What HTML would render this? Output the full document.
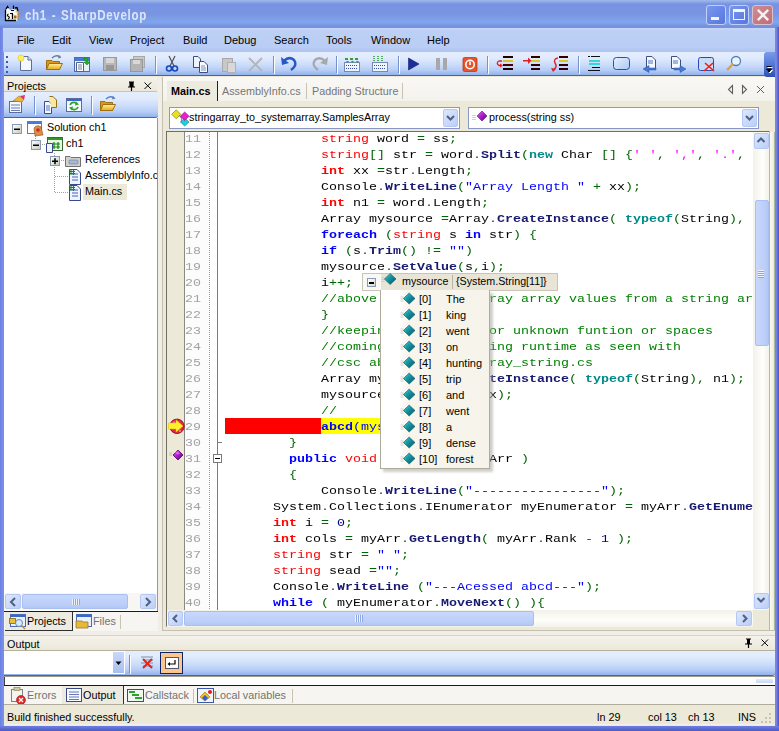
<!DOCTYPE html>
<html><head><meta charset="utf-8">
<style>
*{margin:0;padding:0;box-sizing:border-box}
html,body{width:779px;height:731px;overflow:hidden;background:#ECE9D8;font-family:"Liberation Sans",sans-serif;font-size:11px;color:#000;position:relative}
.a{position:absolute}
i{font-style:normal}
svg{position:absolute;overflow:visible}
#title{left:0;top:0;width:779px;height:28px;background:linear-gradient(#A0BAEC 0,#8EA8E8 2px,#7893E2 4px,#7894E2 14px,#7CA0E8 19px,#80A6EC 22px,#7E9EE8 24px,#7490DC 26px,#7A92DC 28px)}
#title .t{left:25px;top:8px;font-size:13.8px;font-weight:bold;color:#DCE5F8;letter-spacing:0.8px;word-spacing:1px;transform:scaleX(0.84);transform-origin:0 0}
.frameL{background:linear-gradient(90deg,#6A80E4,#7890E8)}
.frameR{background:linear-gradient(90deg,#7C86E6,#7480E2 40%,#4A50C0)}
#menu{left:3px;top:28px;width:772px;height:24px;background:linear-gradient(#C6D6F8 0,#BCCFF5 15%,#BACDF4 80%,#AEC4F0 100%)}
#menu span{position:absolute;top:6px}
.tbar{background:linear-gradient(#E4EEFE 0,#E0EBFD 25%,#CCDDFA 55%,#B4CCF6 80%,#92B2EC 100%)}
.hdr{background:#EDEBE0}
.code{font-family:"Liberation Mono",monospace;font-size:13.33px;line-height:16px;white-space:pre;color:#000;transform:scaleY(0.86);transform-origin:0 0}
.ln{color:#A3A3A3}
.k{color:#FF0000}
.kb{color:#FF0000;font-weight:bold}
.b{color:#0000FF;font-weight:bold}
.bb{color:#0000FF;font-weight:bold}
.sb{color:#0000FF}
.m{color:#191970;font-weight:bold}
.g{color:#008000}
.p{color:#006400}
.s{color:#0000FF}
.n{color:#00008B}
.t2{color:#008B8B;font-weight:bold}
.c{color:#FF00FF}
.sbtn{background:linear-gradient(135deg,#DDE7FD,#BCCEF7);border:1px solid #B4C8F6;border-radius:2px}
.thumbV{background:linear-gradient(90deg,#C9D7FD,#BBCFF8 70%,#B2C8F5);border:1px solid #A9BFF0;border-radius:2px}
.thumbH{background:linear-gradient(#C9D7FD,#BBCFF8 70%,#B2C8F5);border:1px solid #A9BFF0;border-radius:2px}
.sep{width:1px;background:#8DA9DC;border-right:1px solid #fff}
</style></head><body>
<!-- title -->
<div id="title" class="a"><div class="a t">ch1 - SharpDevelop</div></div>
<svg style="left:0;top:0" width="24" height="26" viewBox="0 0 24 26">
 <path d="M5.5 10 L8 8 L10 10 L13 9 L16 10 L17.5 11 V20.5 H5.5Z" fill="#F8F8F4"/>
 <path d="M5.5 9.5 V20.5 H16" fill="none" stroke="#000" stroke-width="1.3"/>
 <path d="M6 9 L7.5 6.5 L8.5 8 M13.5 5.5 V9 M15 8 L17 7.5 L18 11" fill="none" stroke="#000" stroke-width="1.3"/>
 <path d="M11 10.5 h3 M10 13.5 h3" stroke="#000" stroke-width="1.2"/>
 <path d="M8.5 14 Q6.5 15 8.5 16.5 Q10.5 17.5 8 19" fill="none" stroke="#000" stroke-width="1.1"/>
 <path d="M12.5 14 V19" stroke="#000" stroke-width="1.3"/>
 <rect x="14" y="15.5" width="2.5" height="3" fill="#8A7020"/>
 <path d="M18.2 11 V20.5" stroke="#E07818" stroke-width="1.2" stroke-dasharray="1.5 1"/>
 <circle cx="16.5" cy="11.5" r="1" fill="#E0D040"/>
</svg>
<div class="a" style="left:706px;top:5px;width:20px;height:20px;border:1px solid #C3D0F5;border-radius:3px;background:linear-gradient(135deg,#7A98EC,#5676E2)"><div class="a" style="left:4px;top:11px;width:8px;height:3px;background:#F4F6FD"></div></div>
<div class="a" style="left:729px;top:5px;width:20px;height:20px;border:1px solid #C3D0F5;border-radius:3px;background:linear-gradient(135deg,#7A98EC,#5676E2)"><div class="a" style="left:3px;top:3px;width:12px;height:11px;border:1px solid #F4F6FD;border-top-width:3px"></div></div>
<div class="a" style="left:752px;top:5px;width:21px;height:20px;border:1px solid #D8C0CC;border-radius:3px;background:linear-gradient(135deg,#D08C92,#BC6E78)">
 <svg style="left:3px;top:2px" width="14" height="14" viewBox="0 0 14 14"><path d="M1.8 1.8 L12.2 12.2 M12.2 1.8 L1.8 12.2" stroke="#F6F0F2" stroke-width="2.4"/></svg></div>
<!-- frame -->
<div class="a frameL" style="left:0;top:27px;width:3px;height:704px"></div><div class="a" style="left:3px;top:28px;width:1px;height:698px;background:#8494BC"></div>
<div class="a frameR" style="left:775px;top:27px;width:4px;height:704px"></div>
<div class="a" style="left:0;top:726px;width:779px;height:5px;background:linear-gradient(#6E80DE,#4E58C6)"></div>
<!-- menu -->
<div id="menu" class="a">
 <span style="left:14px">File</span><span style="left:49px">Edit</span><span style="left:86px">View</span><span style="left:127px">Project</span><span style="left:180px">Build</span><span style="left:221px">Debug</span><span style="left:271px">Search</span><span style="left:323px">Tools</span><span style="left:368px">Window</span><span style="left:424px">Help</span>
</div>
<!-- toolbar -->
<div class="a tbar" style="left:4px;top:52px;width:764px;height:24px;border-radius:0 3px 3px 0;border-bottom:1px solid #4262BC"></div>
<div class="a" style="left:764px;top:52px;width:11px;height:25px;background:linear-gradient(#7A9CE8,#5278D4 50%,#2E52B4);border-radius:3px 0 0 3px"></div>
<svg style="left:765px;top:66px" width="9" height="9" viewBox="0 0 9 9"><path d="M2.5 1.5 H7.5 M2.5 4 H7.5 L5 7Z" stroke="#fff" fill="#fff" stroke-width="1"/><path d="M1.5 0.5 H6.5 M1.5 3 H6.5 L4 6Z" stroke="#000" fill="#000" stroke-width="1"/></svg>
<svg style="left:0;top:52px" width="779" height="25" viewBox="0 0 779 25">
 <g fill="#3C5BB0"><rect x="6" y="4" width="2" height="2"/><rect x="6" y="9" width="2" height="2"/><rect x="6" y="14" width="2" height="2"/><rect x="6" y="19" width="2" height="2"/></g>
 <!-- new -->
 <path d="M20.5 4.5 H28 L31.5 8 V18.5 H20.5Z" fill="#F4F8FF" stroke="#5C6E9C"/>
 <path d="M28 4.5 V8 H31.5" fill="#DDE4F3" stroke="#5C6E9C"/>
 <circle cx="21" cy="6" r="3" fill="#FFF060" stroke="#E8D020" stroke-width="0.8"/>
 <!-- open -->
 <defs><linearGradient id="fy" x1="0" y1="0" x2="0" y2="1"><stop offset="0" stop-color="#FFF0A0"/><stop offset="1" stop-color="#E8A818"/></linearGradient></defs>
 <path d="M46.5 8.5 H52 L53 9.5 H59.5 V17.5 H46.5Z" fill="#D89818" stroke="#A07010"/>
 <path d="M46.5 17.5 L49 11.5 H62.5 L59.5 17.5Z" fill="url(#fy)" stroke="#A07010"/>
 <path d="M52 6 Q56 2 60 5" fill="none" stroke="#6C7C98" stroke-width="1.3"/><path d="M59 3 L61.5 5.5 L58 6.5Z" fill="#6C7C98"/>
 <!-- add -->
 <rect x="74.5" y="5.5" width="15" height="14" fill="#E8F0FC" stroke="#4A6CB8"/>
 <rect x="75" y="6" width="14" height="3" fill="#4A78D0"/>
 <path d="M76.5 10.5 H83.5 V19.5 H76.5Z" fill="#fff" stroke="#506080"/>
 <path d="M78 13 H82 M78 15 H82 M78 17 H82" stroke="#7080A0"/>
 <path d="M84 6 Q88 5 88 10 L90 10 L87 13 L84 10 L86 10 Q86 8 84 8Z" fill="#20B020" stroke="#108010" stroke-width="0.5"/>
 <!-- save gray -->
 <rect x="103.5" y="5.5" width="13" height="13" fill="#B8B8B8" stroke="#989898"/>
 <rect x="106" y="6" width="8" height="5" fill="#D8D8D8"/><rect x="106" y="13" width="8" height="5" fill="#989898"/>
 <!-- save all gray -->
 <rect x="133.5" y="4.5" width="11" height="11" fill="#C8C8C8" stroke="#A8A8A8"/>
 <rect x="130.5" y="7.5" width="12" height="12" fill="#B4B4B4" stroke="#989898"/>
 <rect x="133" y="8" width="7" height="4" fill="#D8D8D8"/>
 <!-- sep -->
 <rect x="155" y="4" width="1" height="17" fill="#7592D0"/><rect x="156" y="5" width="1" height="17" fill="#fff"/>
 <!-- cut -->
 <path d="M169 4 L174 14 M175 4 L170 14" stroke="#505050" stroke-width="1.2"/>
 <circle cx="169" cy="16.5" r="2.5" fill="none" stroke="#1848B8" stroke-width="1.6"/><circle cx="175" cy="16.5" r="2.5" fill="none" stroke="#1848B8" stroke-width="1.6"/>
 <!-- copy -->
 <path d="M193.5 4.5 H198 L200.5 7 V15.5 H193.5Z" fill="#EEF3FC" stroke="#404C80"/>
 <path d="M199.5 9.5 H204 L207.5 13 V20.5 H199.5Z" fill="#F6F9FF" stroke="#404C80"/>
 <path d="M201 14 H205 M201 16 H206 M201 18 H206" stroke="#8090C0"/>
 <!-- paste gray -->
 <rect x="222.5" y="6.5" width="10" height="13" fill="#C8C8C8" stroke="#A8A8A8"/>
 <rect x="227.5" y="10.5" width="8" height="10" fill="#D8D8D8" stroke="#B0B0B0"/>
 <!-- delete gray -->
 <path d="M249 6 L262 19 M262 6 L249 19" stroke="#B4B4B4" stroke-width="1.8"/>
 <rect x="273" y="4" width="1" height="17" fill="#7592D0"/><rect x="274" y="5" width="1" height="17" fill="#fff"/>
 <!-- undo -->
 <path d="M284 9 Q289 4 294 8 Q298 13 291 18" fill="none" stroke="#2858C8" stroke-width="2.6"/>
 <path d="M281 5 L282 13 L289 11Z" fill="#2858C8"/>
 <!-- redo gray -->
 <path d="M325 9 Q320 4 315 8 Q311 13 318 18" fill="none" stroke="#A8A8A8" stroke-width="2.4"/>
 <path d="M328 5 L327 13 L320 11Z" fill="#A8A8A8"/>
 <rect x="336" y="4" width="1" height="17" fill="#7592D0"/><rect x="337" y="5" width="1" height="17" fill="#fff"/>
 <!-- build -->
 <rect x="344.5" y="10.5" width="15" height="9" fill="#F0F4FC" stroke="#7A88B8"/>
 <g fill="#3050B0"><rect x="346" y="13" width="1" height="1"/><rect x="348" y="13" width="1" height="1"/><rect x="350" y="13" width="1" height="1"/><rect x="352" y="13" width="1" height="1"/><rect x="354" y="13" width="1" height="1"/><rect x="356" y="13" width="1" height="1"/><rect x="346" y="16" width="1" height="1"/><rect x="348" y="16" width="1" height="1"/><rect x="350" y="16" width="1" height="1"/><rect x="352" y="16" width="1" height="1"/><rect x="354" y="16" width="1" height="1"/><rect x="356" y="16" width="1" height="1"/></g>
 <path d="M345 7 h3 M350 7 h3 M355 7 h3" stroke="#30A030" stroke-width="2"/>
 <path d="M346 9 l1.5 2 l1.5 -2 M351 9 l1.5 2 l1.5 -2 M356 9 l1.5 2 l1.5 -2" fill="#30A030"/>
 <rect x="372.5" y="10.5" width="15" height="9" fill="#F0F4FC" stroke="#7A88B8"/>
 <g fill="#3050B0"><rect x="374" y="13" width="1" height="1"/><rect x="376" y="13" width="1" height="1"/><rect x="378" y="13" width="1" height="1"/><rect x="380" y="13" width="1" height="1"/><rect x="382" y="13" width="1" height="1"/><rect x="384" y="13" width="1" height="1"/><rect x="374" y="16" width="1" height="1"/><rect x="376" y="16" width="1" height="1"/><rect x="378" y="16" width="1" height="1"/><rect x="380" y="16" width="1" height="1"/><rect x="382" y="16" width="1" height="1"/><rect x="384" y="16" width="1" height="1"/></g>
 <path d="M374 4 v5 M378 4 v5 M382 4 v5" stroke="#30A030" stroke-width="1.6" stroke-dasharray="1 1"/>
 <rect x="398" y="4" width="1" height="17" fill="#7592D0"/><rect x="399" y="5" width="1" height="17" fill="#fff"/>
 <!-- play -->
 <path d="M408.5 6 L419 12 L408.5 18Z" fill="#1C2E9C" stroke="#101C70" stroke-width="0.6"/>
 <!-- pause -->
 <rect x="436" y="6" width="4" height="12" fill="#A8A8A8"/><rect x="443" y="6" width="4" height="12" fill="#A8A8A8"/>
 <!-- stop -->
 <rect x="463" y="5.5" width="14" height="14" rx="1.5" fill="#E8542A" stroke="#C03810" stroke-width="0.8"/>
 <circle cx="470" cy="12.5" r="4.2" fill="none" stroke="#fff" stroke-width="1.6"/><path d="M470 9.5 V13" stroke="#fff" stroke-width="1.6"/>
 <rect x="487" y="4" width="1" height="17" fill="#7592D0"/><rect x="488" y="5" width="1" height="17" fill="#fff"/>
  <!-- step icons -->
 <rect x="503" y="4" width="10" height="2" fill="#200000"/><rect x="503" y="8" width="10" height="2" fill="#D8C820"/><rect x="503" y="12" width="10" height="2" fill="#4A0000"/><rect x="503" y="16" width="10" height="2" fill="#200000"/>
 <path d="M502 9 H499 Q495.5 11 499 13.5 H501" fill="none" stroke="#E02020" stroke-width="1.3"/><path d="M500 11.5 L503 13.5 L500 15.5Z" fill="#E02020"/>
 <rect x="531" y="4" width="9" height="2" fill="#300000"/><rect x="531" y="8" width="9" height="2" fill="#D8C820"/><rect x="531" y="12" width="9" height="2" fill="#300000"/><rect x="531" y="16" width="9" height="2" fill="#300000"/>
 <rect x="523" y="8" width="6" height="1.5" fill="#E02020"/><path d="M528 5.5 L531.5 8.7 L528 12Z" fill="#E02020"/>
 <rect x="559" y="4" width="9" height="2" fill="#300000"/><rect x="559" y="8" width="9" height="2" fill="#D8C820"/><rect x="559" y="12" width="9" height="2" fill="#300000"/><rect x="559" y="16" width="9" height="2" fill="#300000"/>
 <path d="M558 6 Q553 7 555 11 Q558 15 553 18" fill="none" stroke="#E02020" stroke-width="1.4"/><path d="M551 16 L553 20 L556 17Z" fill="#E02020"/>
 <rect x="578" y="4" width="1" height="17" fill="#7592D0"/><rect x="579" y="5" width="1" height="17" fill="#fff"/>
 <rect x="588" y="4" width="2" height="1" fill="#101010"/><rect x="591" y="4" width="9" height="1" fill="#101010"/>
 <rect x="589" y="8" width="11" height="2" fill="#30D8D8"/><rect x="589" y="11" width="11" height="2" fill="#30D8D8"/>
 <rect x="592" y="15" width="8" height="1" fill="#101010"/><rect x="588" y="18" width="12" height="1" fill="#101010"/>
 <defs><linearGradient id="rr" x1="0" y1="0" x2="1" y2="1"><stop offset="0" stop-color="#E8F2FF"/><stop offset="1" stop-color="#A8C8F0"/></linearGradient></defs>
 <rect x="613.5" y="5.5" width="16" height="12" rx="3" fill="url(#rr)" stroke="#2848D0"/>
<!-- page arrows -->
 <path d="M646.5 4.5 H652 L655.5 8 V16.5 H646.5Z" fill="#F4F8FF" stroke="#404C80"/>
 <path d="M648 9 H653 M648 11 H653" stroke="#5070C0"/>
 <path d="M656 16 H649 V13.5 L643 17 L649 20.5 V18 H656Z" fill="#4878D0" stroke="#2050A8" stroke-width="0.5"/>
 <path d="M671.5 4.5 H677 L680.5 8 V16.5 H671.5Z" fill="#F4F8FF" stroke="#404C80"/>
 <path d="M673 9 H678 M673 11 H678" stroke="#5070C0"/>
 <path d="M674 16 H680 V13.5 L686 17 L680 20.5 V18 H674Z" fill="#4878D0" stroke="#2050A8" stroke-width="0.5"/>
 <rect x="698.5" y="5.5" width="15" height="13" rx="2" fill="#C8DCF8" stroke="#2848B8"/>
 <path d="M705 11 L714 19 M713 11 L704 19" stroke="#F02010" stroke-width="1.6"/>
 <circle cx="736" cy="9" r="4.5" fill="#E8F4FF" stroke="#5080B0" stroke-width="1.3"/>
 <path d="M733 12 L727 18" stroke="#E0A040" stroke-width="2.4"/>
</svg>
<!-- projects pad -->
<div class="a" style="left:4px;top:77px;width:154px;height:15px;background:linear-gradient(#F4F2EA,#EBE8DA);border-right:1px solid #B8B4A0;border-bottom:1px solid #C8C4B0"></div>
<div class="a" style="left:7px;top:80px;font-size:10.8px">Projects</div>
<svg style="left:126px;top:81px" width="30" height="11" viewBox="0 0 30 11">
 <path d="M3 1 H8 M4 1 V6 H7 V1 M2 6 H9 M5.5 6 V10" stroke="#000" stroke-width="1.2" fill="none"/><rect x="4" y="1" width="3" height="5" fill="#000"/>
 <path d="M18.5 1.5 L25 8 M25 1.5 L18.5 8" stroke="#000" stroke-width="1"/>
</svg>
<div class="a" style="left:157px;top:77px;width:5px;height:554px;background:#F0EEE6"></div>
<div class="a tbar" style="left:4px;top:92px;width:154px;height:26px;border-bottom:1px solid #4262BC;border-radius:0 0 3px 0"></div>
<svg style="left:0;top:92px" width="160" height="26" viewBox="0 0 160 26">
 <rect x="9.5" y="9.5" width="12" height="11" fill="#F4F8FF" stroke="#5A6A9C"/>
 <path d="M11 13 H20 M11 16 H20 M11 18.5 H20" stroke="#6A7AAC"/>
 <path d="M13 9 L19 4 L24 7 L22 10Z" fill="#E8B838" stroke="#A07820" stroke-width="0.6"/><path d="M20 4 L25 3 L24 8Z" fill="#E83070"/>
 <rect x="34" y="4" width="1" height="18" fill="#7592D0"/><rect x="35" y="5" width="1" height="18" fill="#fff"/>
 <path d="M44.5 9.5 H49 L51.5 12 V21.5 H44.5Z" fill="#F4F8FF" stroke="#404C80"/>
 <path d="M46 14 H50 M46 16 H50 M46 18 H50" stroke="#5070C0"/>
 <path d="M49.5 4.5 H53 L56.5 8 V15.5 H51" fill="#F8E8A0" stroke="#907020"/>
 <rect x="66.5" y="6.5" width="15" height="13" fill="#F4F8FF" stroke="#5A6A9C"/><rect x="67" y="7" width="14" height="2" fill="#3A68C8"/>
 <path d="M70 13 A4 4 0 0 1 77 12" fill="none" stroke="#30A030" stroke-width="1.8"/><path d="M76 9.5 L79 12.5 L75 13.5Z" fill="#30A030"/>
 <path d="M78 15 A4 4 0 0 1 71 16" fill="none" stroke="#30A030" stroke-width="1.8"/><path d="M72 18.5 L69 15.5 L73 14.5Z" fill="#30A030"/>
 <rect x="91" y="4" width="1" height="18" fill="#7592D0"/><rect x="92" y="5" width="1" height="18" fill="#fff"/>
 <path d="M100.5 9.5 H105 L106 10.5 H112.5 V18.5 H100.5Z" fill="#D89818" stroke="#A07010"/>
 <path d="M100.5 18.5 L103 12.5 H115.5 L112.5 18.5Z" fill="url(#fy)" stroke="#A07010"/>
 <path d="M106 7 Q110 3 114 6" fill="none" stroke="#5A7AB8" stroke-width="1.3"/><path d="M113 4 L115.5 6.5 L112 7.5Z" fill="#5A7AB8"/>
</svg>
<div class="a" style="left:4px;top:118px;width:153px;height:493px;background:#fff"></div><div class="a" style="left:157px;top:118px;width:1px;height:493px;background:#7F9AD0"></div>
<!-- tree -->
<svg style="left:0;top:118px" width="157" height="90" viewBox="0 0 157 90">
 <g stroke="#A0A0A0" stroke-dasharray="1 1" fill="none">
  <path d="M35.5 16 V26"/><path d="M40 26.5 H46"/>
  <path d="M54.5 35 V74.5"/><path d="M59 42.5 H65"/><path d="M55 58.5 H68"/><path d="M55 74.5 H68"/>
 </g>
 <defs><linearGradient id="bx" x1="0" y1="0" x2="1" y2="1"><stop offset="0" stop-color="#fff"/><stop offset="1" stop-color="#C8C8C0"/></linearGradient></defs><g fill="url(#bx)" stroke="#8A9AB0">
  <rect x="12.5" y="6.5" width="9" height="9"/><rect x="31.5" y="22.5" width="9" height="9"/><rect x="50.5" y="38.5" width="9" height="9"/>
 </g>
 <g fill="#000"><rect x="14" y="10.5" width="6" height="1.5"/><rect x="33" y="26.5" width="6" height="1.5"/><rect x="52" y="42.5" width="6" height="1.5"/><rect x="54.25" y="40.2" width="1.5" height="6"/></g>
 <!-- solution icon -->
 <rect x="27.5" y="3.5" width="14" height="12" fill="#fff" stroke="#6A7AA8"/><rect x="28" y="4" width="13" height="2" fill="#4A7AD8"/>
 <path d="M34 10 Q37 6 41 9 L43 17 L35 18Z" fill="#D89048" stroke="#8A5020" stroke-width="0.6"/><circle cx="38" cy="12" r="1.8" fill="#E02020"/>
 <!-- project icon -->
 <rect x="47.5" y="19.5" width="15" height="13" fill="#E8F8E0" stroke="#3A6A3A"/><rect x="48" y="20" width="14" height="2" fill="#2A9A2A"/>
 <path d="M54 24 v7 M58 24 v7 M52 26 h8 M52 29 h8" stroke="#108010" stroke-width="1.2"/>
 <path d="M46.5 25.5 H52.5 V34.5 H46.5Z" fill="#F0F4FF" stroke="#3A4A8A"/>
 <!-- references folder -->
 <path d="M65.5 38.5 H70 L71 39.5 H80.5 V48.5 H65.5Z" fill="#D0D0D0" stroke="#707070"/>
 <rect x="69" y="42" width="9" height="4" rx="1" fill="#A8B8D0" stroke="#6878A0" stroke-width="0.6"/>
 <!-- cs files -->
 <path d="M69.5 51.5 H77 L80.5 55 V66.5 H69.5Z" fill="#F0F4FF" stroke="#3A4A8A"/>
 <path d="M72 56 H78 M72 59 H78 M72 62 H78" stroke="#4060C0"/>
 <path d="M71 52 v5 M73.5 52 v5 M70 53.5 h5 M70 55.5 h5" stroke="#109010" stroke-width="1.1"/>
 <path d="M69.5 67.5 H77 L80.5 71 V82.5 H69.5Z" fill="#F0F4FF" stroke="#3A4A8A"/>
 <path d="M72 72 H78 M72 75 H78 M72 78 H78" stroke="#4060C0"/>
 <path d="M71 68 v5 M73.5 68 v5 M70 69.5 h5 M70 71.5 h5" stroke="#109010" stroke-width="1.1"/>
</svg>
<div class="a" style="left:47px;top:121px;font-size:10.8px">Solution ch1</div>
<div class="a" style="left:66px;top:137px;font-size:10.8px">ch1</div>
<div class="a" style="left:85px;top:153px;font-size:10.8px">References</div>
<div class="a" style="left:85px;top:169px;width:72px;overflow:hidden;white-space:nowrap;font-size:10.8px">AssemblyInfo.cs</div>
<div class="a" style="left:83px;top:184px;width:44px;height:16px;background:#ECE9D8"></div>
<div class="a" style="left:85px;top:185px;font-size:10.8px">Main.cs</div>
<!-- projects hscroll -->
<div class="a" style="left:4px;top:593px;width:153px;height:17px;background:#F7F6F2"></div>
<div class="a sbtn" style="left:5px;top:594px;width:16px;height:15px"></div>
<div class="a thumbH" style="left:22px;top:594px;width:106px;height:15px"></div>
<div class="a sbtn" style="left:140px;top:594px;width:16px;height:15px"></div>
<svg style="left:0;top:594px" width="160" height="16" viewBox="0 0 160 16">
 <path d="M15 4 L11 8 L15 12" fill="none" stroke="#4D6185" stroke-width="2"/>
 <path d="M146 4 L150 8 L146 12" fill="none" stroke="#4D6185" stroke-width="2"/>
 <path d="M72.5 5 v6 M74.5 5 v6 M76.5 5 v6 M78.5 5 v6" stroke="#EEF3FE"/>
 <path d="M73.5 5 v6 M75.5 5 v6 M77.5 5 v6 M79.5 5 v6" stroke="#8DA6E0"/>
</svg>
<div class="a" style="left:4px;top:611px;width:154px;height:1px;background:#1A1A1A"></div>
<div class="a" style="left:4px;top:612px;width:154px;height:19px;background:#F6F5F1"></div>
<div class="a" style="left:5px;top:612px;width:68px;height:19px;background:#EDEBE0;border-right:1px solid #303030;border-bottom:1px solid #303030"></div>
<svg style="left:0;top:612px" width="160" height="19" viewBox="0 0 160 19">
 <rect x="10.5" y="2.5" width="15" height="12" fill="#E8F0FC" stroke="#4A6CB8"/><rect x="11" y="3" width="14" height="2" fill="#3A68C8"/>
 <rect x="9.5" y="6.5" width="6" height="5" fill="#E8C040" stroke="#A07820"/>
 <circle cx="19" cy="11" r="3.5" fill="#D8ECFC" stroke="#6A8AB0"/><path d="M21.5 13.5 L25 17" stroke="#C09040" stroke-width="1.5"/>
 <rect x="76.5" y="2.5" width="15" height="12" fill="#E8F0FC" stroke="#4A6CB8"/><rect x="77" y="3" width="14" height="2" fill="#3A68C8"/>
 <path d="M76 9 H82 L83 10 H88 V16 H76Z" fill="#E8B838" stroke="#A07820" stroke-width="0.8"/>
 <rect x="120" y="3" width="1" height="14" fill="#C8C4B4"/>
</svg>
<div class="a" style="left:27px;top:615px;font-size:10.8px">Projects</div>
<div class="a" style="left:93px;top:615px;font-size:10.8px;color:#727272">Files</div>
<!-- editor container -->
<div class="a" style="left:162px;top:77px;width:613px;height:554px;background:#ECE9D8;border-left:1px solid #C4C0B0"></div>
<div class="a" style="left:163px;top:77px;width:612px;height:24px;background:linear-gradient(#F9F8F5,#F3F2EC)"></div>
<div class="a" style="left:167px;top:81px;width:51px;height:20px;background:#EDEBE0;border-right:1px solid #202020"></div>
<div class="a" style="left:171px;top:85px;font-size:10.8px;font-weight:bold">Main.cs</div>
<div class="a" style="left:222px;top:85px;font-size:10.8px;color:#767676">AssemblyInfo.cs</div>
<div class="a" style="left:306px;top:83px;width:1px;height:16px;background:#C8C4B4"></div>
<div class="a" style="left:312px;top:85px;font-size:10.8px;color:#767676">Padding Structure</div>
<div class="a" style="left:402px;top:83px;width:1px;height:16px;background:#C8C4B4"></div>
<svg style="left:720px;top:80px" width="50" height="20" viewBox="0 0 50 20">
 <path d="M12.5 5.5 L8.5 9.5 L12.5 13.5Z" fill="none" stroke="#606060" stroke-width="1.1" stroke-linejoin="miter"/>
 <path d="M22.5 5.5 L26.5 9.5 L22.5 13.5Z" fill="none" stroke="#606060" stroke-width="1.1"/>
 <path d="M37 6 L44 13 M44 6 L37 13" stroke="#606060" stroke-width="1"/>
</svg>
<!-- combos -->
<div class="a" style="left:169px;top:107px;width:291px;height:22px;background:#fff;border:1px solid #8896C8"></div>
<div class="a sbtn" style="left:443px;top:109px;width:15px;height:18px"></div>
<div class="a" style="left:468px;top:107px;width:291px;height:22px;background:#fff;border:1px solid #8896C8"></div>
<div class="a sbtn" style="left:742px;top:109px;width:15px;height:18px"></div>
<svg style="left:0;top:107px" width="779" height="22" viewBox="0 0 779 22">
 <path d="M447 9 L450.5 12.5 L454 9" fill="none" stroke="#4D6185" stroke-width="2"/>
 <path d="M746 9 L749.5 12.5 L753 9" fill="none" stroke="#4D6185" stroke-width="2"/>
 <path d="M179 8 L181.5 11 V15 L184 17" fill="none" stroke="#9090A0" stroke-width="1.2"/>
 <path d="M184.7 11 L189 15 L184.7 19 L180.4 15Z" fill="#20D0D0" stroke="#008888" stroke-width="0.6"/>
 <path d="M184.7 5 L189 9.2 L184.7 13.4 L180.4 9.2Z" fill="#E820D0" stroke="#900080" stroke-width="0.6"/>
 <path d="M176.2 2.8 L180.7 7.3 L176.2 11.8 L171.7 7.3Z" fill="#E8E020" stroke="#707000" stroke-width="0.6"/>
 <defs><linearGradient id="pg" x1="0" y1="0" x2="1" y2="1"><stop offset="0" stop-color="#F070FF"/><stop offset="0.45" stop-color="#B020D0"/><stop offset="1" stop-color="#500070"/></linearGradient></defs>
 <path d="M472 8.5 h4 M472 10.5 h4 M472 12.5 h4" stroke="#C8C8A8" stroke-width="0.8"/>
 <path d="M482 4 L487 9 L482 14 L477 9Z" fill="url(#pg)" stroke="#601080" stroke-width="0.6"/>
</svg>
<div class="a" style="left:189px;top:111px;font-size:10.8px">stringarray_to_systemarray.SamplesArray</div>
<div class="a" style="left:489px;top:111px;font-size:10.8px">process(string ss)</div>
<!-- editor -->
<div class="a" style="left:166px;top:131px;width:604px;height:496px;background:#fff;border-top:1px solid #716F64;border-left:1px solid #716F64;border-right:1px solid #F1EFE2;border-bottom:1px solid #F1EFE2"></div>
<div class="a" style="left:167px;top:132px;width:17px;height:478px;background:#ECE9D8"></div>
<div class="a" style="left:184px;top:132px;width:25px;height:478px;background:#FCFCFC;border-left:1px solid #8A8A84"></div>
<div class="a" style="left:209px;top:132px;width:1px;height:478px;background:repeating-linear-gradient(#9A9A9A 0 1px,transparent 1px 2px)"></div>
<div class="a" style="left:217px;top:132px;width:1px;height:478px;background:#7A7A7A"></div>
<div class="a" style="left:218px;top:442px;width:4px;height:1px;background:#7A7A7A"></div>
<div class="a" style="left:213px;top:454px;width:9px;height:9px;background:#fff;border:1px solid #7A7A7A"></div>
<div class="a" style="left:215px;top:458px;width:5px;height:1px;background:#000"></div>
<!-- highlight line 29 -->
<div class="a" style="left:225px;top:418px;width:96px;height:16px;background:#FF0000"></div>
<div class="a" style="left:321px;top:418px;width:60px;height:16px;background:#FFFF00"></div>
<div class="a" style="left:167px;top:132px;width:586px;height:478px;overflow:hidden">
 <div class="a" style="left:-167px;top:-132px;width:779px;height:731px">
<div class="a code" style="left:225px;top:132.5px">            <i class="k">string</i> word <i class="p">=</i> ss<i class="p">;</i></div>
<div class="a code ln" style="left:185px;top:132.5px">11</div>
<div class="a code" style="left:225px;top:148.5px">            <i class="k">string</i><i class="p">[]</i> str <i class="p">=</i> word<i class="p">.</i><i class="m">Split</i><i class="p">(</i><i class="t2">new</i> Char <i class="p">[]</i> <i class="p">{</i><i class="c">&#x27; &#x27;</i><i class="p">, </i><i class="c">&#x27;,&#x27;</i><i class="p">, </i><i class="c">&#x27;.&#x27;</i><i class="p">, </i><i class="c">&#x27;!&#x27;</i><i class="p">}</i></div>
<div class="a code ln" style="left:185px;top:148.5px">12</div>
<div class="a code" style="left:225px;top:164.5px">            <i class="kb">int</i> xx <i class="p">=</i>str<i class="p">.</i>Length<i class="p">;</i></div>
<div class="a code ln" style="left:185px;top:164.5px">13</div>
<div class="a code" style="left:225px;top:180.5px">            Console<i class="p">.</i><i class="m">WriteLine</i><i class="p">(</i><i class="s">&quot;Array Length &quot;</i> <i class="p">+</i> xx<i class="p">);</i></div>
<div class="a code ln" style="left:185px;top:180.5px">14</div>
<div class="a code" style="left:225px;top:196.5px">            <i class="kb">int</i> n1 <i class="p">=</i> word<i class="p">.</i>Length<i class="p">;</i></div>
<div class="a code ln" style="left:185px;top:196.5px">15</div>
<div class="a code" style="left:225px;top:212.5px">            Array mysource <i class="p">=</i>Array<i class="p">.</i><i class="m">CreateInstance</i><i class="p">(</i> <i class="t2">typeof</i><i class="p">(</i>String<i class="p">),</i> n1<i class="p">);</i></div>
<div class="a code ln" style="left:185px;top:212.5px">16</div>
<div class="a code" style="left:225px;top:228.5px">            <i class="b">foreach</i> <i class="p">(</i><i class="k">string</i> s <i class="b">in</i> str<i class="p">)</i> <i class="p">{</i></div>
<div class="a code ln" style="left:185px;top:228.5px">17</div>
<div class="a code" style="left:225px;top:244.5px">            <i class="b">if</i> <i class="p">(</i>s<i class="p">.</i><i class="m">Trim</i><i class="p">()</i> <i class="p">!=</i> <i class="s">&quot;&quot;</i><i class="p">)</i></div>
<div class="a code ln" style="left:185px;top:244.5px">18</div>
<div class="a code" style="left:225px;top:260.5px">            mysource<i class="p">.</i><i class="m">SetValue</i><i class="p">(</i>s<i class="p">,</i>i<i class="p">);</i></div>
<div class="a code ln" style="left:185px;top:260.5px">19</div>
<div class="a code" style="left:225px;top:276.5px">            i<i class="p">++;</i></div>
<div class="a code ln" style="left:185px;top:276.5px">20</div>
<div class="a code" style="left:225px;top:292.5px">            <i class="g">//above code to fill ray array values from a string array</i></div>
<div class="a code ln" style="left:185px;top:292.5px">21</div>
<div class="a code" style="left:225px;top:308.5px">            <i class="p">}</i></div>
<div class="a code ln" style="left:185px;top:308.5px">22</div>
<div class="a code" style="left:225px;top:324.5px">            <i class="g">//keeping blank spaceor unknown funtion or spaces</i></div>
<div class="a code ln" style="left:185px;top:324.5px">23</div>
<div class="a code" style="left:225px;top:340.5px">            <i class="g">//coming in while during runtime as seen with</i></div>
<div class="a code ln" style="left:185px;top:340.5px">24</div>
<div class="a code" style="left:225px;top:356.5px">            <i class="g">//csc abcd_to_arrayarray_string.cs</i></div>
<div class="a code ln" style="left:185px;top:356.5px">25</div>
<div class="a code" style="left:225px;top:372.5px">            Array my2 <i class="p">=</i>Array<i class="p">.</i><i class="m">CreateInstance</i><i class="p">(</i> <i class="t2">typeof</i><i class="p">(</i>String<i class="p">),</i> n1<i class="p">);</i></div>
<div class="a code ln" style="left:185px;top:372.5px">26</div>
<div class="a code" style="left:225px;top:388.5px">            mysource<i class="p">.</i><i class="m">SetValue</i><i class="p">(</i>i, x<i class="p">);</i></div>
<div class="a code ln" style="left:185px;top:388.5px">27</div>
<div class="a code" style="left:225px;top:404.5px">            <i class="g">//</i></div>
<div class="a code ln" style="left:185px;top:404.5px">28</div>
<div class="a code" style="left:225px;top:420.5px">            <i class="bb">abcd</i><i class="sb">(mysource)</i></div>
<div class="a code ln" style="left:185px;top:420.5px">29</div>
<div class="a code" style="left:225px;top:436.5px">        <i class="p">}</i></div>
<div class="a code ln" style="left:185px;top:436.5px">30</div>
<div class="a code" style="left:225px;top:452.5px">        <i class="b">public</i> <i class="k">void</i> abcd<i class="p">(</i>Array myArr <i class="p">)</i></div>
<div class="a code ln" style="left:185px;top:452.5px">31</div>
<div class="a code" style="left:225px;top:468.5px">        <i class="p">{</i></div>
<div class="a code ln" style="left:185px;top:468.5px">32</div>
<div class="a code" style="left:225px;top:484.5px">            Console<i class="p">.</i><i class="m">WriteLine</i><i class="p">(</i><i class="s">&quot;----------------&quot;</i><i class="p">);</i></div>
<div class="a code ln" style="left:185px;top:484.5px">33</div>
<div class="a code" style="left:225px;top:500.5px">      System<i class="p">.</i>Collections<i class="p">.</i>IEnumerator myEnumerator <i class="p">=</i> myArr<i class="p">.</i><i class="m">GetEnumerator</i><i class="p">();</i></div>
<div class="a code ln" style="left:185px;top:500.5px">34</div>
<div class="a code" style="left:225px;top:516.5px">      <i class="kb">int</i> i <i class="p">=</i> <i class="n">0</i><i class="p">;</i></div>
<div class="a code ln" style="left:185px;top:516.5px">35</div>
<div class="a code" style="left:225px;top:532.5px">      <i class="kb">int</i> cols <i class="p">=</i> myArr<i class="p">.</i><i class="m">GetLength</i><i class="p">(</i> myArr<i class="p">.</i>Rank <i class="p">-</i> <i class="n">1</i> <i class="p">);</i></div>
<div class="a code ln" style="left:185px;top:532.5px">36</div>
<div class="a code" style="left:225px;top:548.5px">      <i class="k">string</i> str <i class="p">=</i> <i class="s">&quot; &quot;</i><i class="p">;</i></div>
<div class="a code ln" style="left:185px;top:548.5px">37</div>
<div class="a code" style="left:225px;top:564.5px">      <i class="k">string</i> sead <i class="p">=</i><i class="s">&quot;&quot;</i><i class="p">;</i></div>
<div class="a code ln" style="left:185px;top:564.5px">38</div>
<div class="a code" style="left:225px;top:580.5px">      Console<i class="p">.</i><i class="m">WriteLine</i> <i class="p">(</i><i class="s">&quot;---Acessed abcd---&quot;</i><i class="p">);</i></div>
<div class="a code ln" style="left:185px;top:580.5px">39</div>
<div class="a code" style="left:225px;top:596.5px">      <i class="b">while</i> <i class="p">(</i> myEnumerator<i class="p">.</i><i class="m">MoveNext</i><i class="p">()</i> <i class="p">)</i><i class="p">{</i></div>
<div class="a code ln" style="left:185px;top:596.5px">40</div>
 </div>
</div>
<!-- margin icons -->
<svg style="left:166px;top:416px" width="20" height="40" viewBox="0 0 20 40">
 <circle cx="11" cy="10.3" r="7.2" fill="#E02838" stroke="#A01020" stroke-width="1"/>
 <circle cx="8" cy="6.5" r="1.3" fill="#F070A0"/><circle cx="14" cy="15" r="1.2" fill="#F070A0"/>
 <path d="M2.5 7 H10 V3.8 L17 10 L10 16.2 V13 H2.5Z" fill="#FFF030" stroke="#E0C000" stroke-width="0.5"/>
 <path d="M12 34 L17 39 L12 44 L7 39Z" fill="url(#pg)" stroke="#500060" stroke-width="0.8"/><path d="M9 36 L12 35.5 L14 38 L11 38.5Z" fill="#E060F0"/>
 <path d="M3 37 h3 M3 39 h3" stroke="#C0C0C0"/>
</svg>
<!-- vscroll -->
<div class="a" style="left:753px;top:132px;width:16px;height:478px;background:linear-gradient(90deg,#F3F1EA,#FEFEFB 60%,#F3F1EA)"></div>
<div class="a sbtn" style="left:754px;top:133px;width:15px;height:16px"></div>
<div class="a thumbV" style="left:755px;top:200px;width:14px;height:146px"></div>
<div class="a sbtn" style="left:754px;top:593px;width:15px;height:16px"></div>
<svg style="left:753px;top:132px" width="17" height="478" viewBox="0 0 17 478">
 <path d="M4.5 10 L8 6.5 L11.5 10" fill="none" stroke="#4D6185" stroke-width="2"/>
 <path d="M4.5 466 L8 469.5 L11.5 466" fill="none" stroke="#4D6185" stroke-width="2"/>
 <path d="M5 138.5 h6 M5 140.5 h6 M5 142.5 h6 M5 144.5 h6" stroke="#EEF3FE"/>
 <path d="M5 139.5 h6 M5 141.5 h6 M5 143.5 h6 M5 145.5 h6" stroke="#8DA6E0"/>
</svg>
<!-- hscroll -->
<div class="a" style="left:167px;top:610px;width:586px;height:17px;background:linear-gradient(#F3F1EA,#FEFEFB 60%,#F3F1EA)"></div>
<div class="a sbtn" style="left:168px;top:611px;width:15px;height:15px"></div>
<div class="a thumbH" style="left:184px;top:611px;width:350px;height:15px"></div>
<div class="a sbtn" style="left:736px;top:611px;width:16px;height:15px"></div>
<div class="a" style="left:753px;top:610px;width:16px;height:17px;background:#ECE9D8"></div>
<svg style="left:167px;top:611px" width="586" height="16" viewBox="0 0 586 16">
 <path d="M10 4 L6.5 7.5 L10 11" fill="none" stroke="#4D6185" stroke-width="2"/>
 <path d="M576 4 L579.5 7.5 L576 11" fill="none" stroke="#4D6185" stroke-width="2"/>
 <path d="M188.5 4 v7 M190.5 4 v7 M192.5 4 v7 M194.5 4 v7" stroke="#EEF3FE"/>
 <path d="M189.5 4 v7 M191.5 4 v7 M193.5 4 v7 M195.5 4 v7" stroke="#8DA6E0"/>
</svg>
<div class="a" style="left:162px;top:630px;width:613px;height:1px;background:#C4C0B0"></div>
<div class="a" style="left:769px;top:132px;width:6px;height:498px;background:linear-gradient(90deg,#A8B8D0 0,#A8B8D0 1px,#FBF8EE 1px,#F2F0E4 4px,#F8E6DE 4px,#F8E6DE 5px,#A8BCA0 5px)"></div>
<!-- tooltip -->
<div class="a" style="left:362px;top:273px;width:196px;height:18px;background:#E9E5D6;border:1px solid #C9C5B5"></div>
<div class="a" style="left:363px;top:274px;width:18px;height:16px;background:#F8F8F6"></div>
<div class="a" style="left:367px;top:278px;width:9px;height:9px;background:linear-gradient(135deg,#fff,#D8D8D0);border:1px solid #8A9AB0"></div>
<div class="a" style="left:369px;top:282px;width:5px;height:1.5px;background:#000"></div>
<div class="a" style="left:452px;top:275px;width:1px;height:14px;background:#B8B4A4"></div>
<div class="a" style="left:402px;top:275px;font-size:10.7px">mysource</div>
<div class="a" style="left:456px;top:275px;font-size:10.7px">{System.String[11]}</div>
<div class="a" style="left:383px;top:293px;width:110px;height:179px;background:#A8A8A0;opacity:0.55;filter:blur(1px)"></div>
<div class="a" style="left:380px;top:290px;width:110px;height:179px;background:linear-gradient(90deg,#fff 0,#fff 18px,#F7F5EC 28px,#F6F4EA);border:1px solid #B0AC9C;border-top:none"></div>
<svg style="left:395px;top:291px" width="30" height="180" viewBox="0 0 30 180">
 <defs><linearGradient id="dg" x1="0" y1="0" x2="1" y2="1"><stop offset="0" stop-color="#70D8E0"/><stop offset="0.4" stop-color="#1898A8"/><stop offset="1" stop-color="#05505C"/></linearGradient>
 <g id="dia"><path d="M5.5 6 h3 M5.5 8 h3 M5.5 10 h3" stroke="#C8C8B0" stroke-width="0.8"/><path d="M14.2 2 L20 7.5 L14.2 13 L8.4 7.5Z" fill="url(#dg)" stroke="#0A5A68" stroke-width="0.6"/></g></defs>
 <use href="#dia" y="0"/><use href="#dia" y="16"/><use href="#dia" y="32"/><use href="#dia" y="48"/><use href="#dia" y="64"/><use href="#dia" y="80"/><use href="#dia" y="96"/><use href="#dia" y="112"/><use href="#dia" y="128"/><use href="#dia" y="144"/><use href="#dia" y="160"/>
</svg>
<svg style="left:376px;top:273px" width="30" height="18" viewBox="0 0 30 18"><use href="#dia" y="-1.5"/></svg>
<div class="a" style="left:419px;top:291px;font-size:11px;line-height:16px">[0]<br>[1]<br>[2]<br>[3]<br>[4]<br>[5]<br>[6]<br>[7]<br>[8]<br>[9]<br>[10]</div>
<div class="a" style="left:446px;top:291px;font-size:11px;line-height:16px">The<br>king<br>went<br>on<br>hunting<br>trip<br>and<br>went<br>a<br>dense<br>forest</div>
<!-- output pad -->
<div class="a" style="left:4px;top:631px;width:771px;height:5px;background:#F0EEE6"></div>
<div class="a" style="left:4px;top:635px;width:771px;height:1px;background:#D8D4C4"></div>
<div class="a" style="left:4px;top:636px;width:771px;height:15px;background:linear-gradient(#F4F2EA,#EBE8DA)"></div>
<div class="a" style="left:7px;top:638px;font-size:10.8px">Output</div>
<svg style="left:743px;top:638px" width="30" height="11" viewBox="0 0 30 11">
 <path d="M3 1 H8 M2 6 H9 M5.5 6 V10" stroke="#000" stroke-width="1.2" fill="none"/><rect x="4" y="1" width="3" height="5" fill="#000"/>
 <path d="M18.5 1.5 L25 8 M25 1.5 L18.5 8" stroke="#000" stroke-width="1"/>
</svg>
<div class="a" style="left:4px;top:650px;width:771px;height:1px;background:#B4B09C"></div><div class="a tbar" style="left:4px;top:651px;width:771px;height:25px;border-bottom:1px solid #4262BC;border-radius:0 0 3px 0"></div>
<div class="a" style="left:4px;top:651px;width:121px;height:23px;background:#fff"></div>
<div class="a" style="left:113px;top:652px;width:11px;height:21px;background:linear-gradient(#C8D8FA,#A8C0F0)"></div>
<svg style="left:0;top:651px" width="200" height="25" viewBox="0 0 200 25">
 <path d="M115.5 10.5 h6 l-3 3.5z" fill="#000"/>
 <rect x="129" y="4" width="1" height="18" fill="#7592D0"/><rect x="130" y="5" width="1" height="18" fill="#fff"/>
 <path d="M141 6 H153 M143 9 H153 M141 12 H153 M143 15 H153" stroke="#8090A8" stroke-width="1"/>
 <path d="M143 8 L152 17 M152 8 L143 17" stroke="#F02010" stroke-width="2"/>
 <rect x="160.5" y="1.5" width="22" height="21" fill="#FFC68C" stroke="#0A246A"/>
 <rect x="165.5" y="6.5" width="13" height="11" fill="#fff" stroke="#505870"/>
 <path d="M175 9 V13 H169" fill="none" stroke="#000" stroke-width="1.2"/><path d="M170 11 L167.5 13 L170 15Z" fill="#000"/>
</svg>
<div class="a" style="left:4px;top:676px;width:771px;height:1px;background:#A09C88"></div>
<div class="a" style="left:4px;top:677px;width:771px;height:8px;background:#fff;border-left:1px solid #404040"></div>
<div class="a" style="left:756px;top:679px;width:17px;height:4px;background:linear-gradient(#E4ECFB,#C8D8F4)"></div>
<div class="a" style="left:4px;top:685px;width:771px;height:1px;background:#1A1A1A"></div>
<div class="a" style="left:4px;top:686px;width:771px;height:19px;background:#F6F5F1"></div>
<div class="a" style="left:62px;top:686px;width:62px;height:19px;background:#EDEBE0;border-right:1px solid #303030;border-bottom:1px solid #303030"></div>
<svg style="left:0;top:686px" width="320" height="19" viewBox="0 0 320 19">
 <rect x="11.5" y="3.5" width="11" height="12" fill="#F4F4F0" stroke="#808080"/><rect x="14" y="1.5" width="6" height="3" fill="#D0C8A0" stroke="#807850" stroke-width="0.6"/>
 <circle cx="21" cy="14" r="4.5" fill="#E02828" stroke="#A01010" stroke-width="0.6"/><path d="M19 12 L23 16 M23 12 L19 16" stroke="#fff" stroke-width="1.3"/>
 <rect x="66.5" y="2.5" width="15" height="13" fill="#F4F8FF" stroke="#3A4A8A"/><path d="M69 6 H79 M69 8.5 H79 M69 11 H79 M69 13.5 H79" stroke="#6A7AB8"/>
 <rect x="127.5" y="3.5" width="16" height="12" fill="#F0F8F0" stroke="#306030"/>
 <path d="M129 6 h6 M132 9 h7 M135 12 h7" stroke="#30A030" stroke-width="2.2"/>
 <rect x="193" y="3" width="1" height="14" fill="#C8C4B4"/>
 <rect x="197.5" y="2.5" width="16" height="14" fill="#F0F4FC" stroke="#3A5AA8"/>
 <path d="M200 11 L205 6 L210 11 L205 15Z" fill="#F0C020" stroke="#A07000" stroke-width="0.6"/><path d="M202 12 L205 9 L208 12 L205 15Z" fill="#3060D0"/><circle cx="210" cy="6" r="2" fill="#E02020"/>
 <rect x="292" y="3" width="1" height="14" fill="#C8C4B4"/>
</svg>
<div class="a" style="left:27px;top:689px;font-size:10.8px;color:#727272">Errors</div>
<div class="a" style="left:83px;top:689px;font-size:10.8px">Output</div>
<div class="a" style="left:145px;top:689px;font-size:10.8px;color:#727272">Callstack</div>
<div class="a" style="left:214px;top:689px;font-size:10.8px;color:#727272">Local variables</div>
<!-- status -->
<div class="a" style="left:4px;top:704px;width:771px;height:1px;background:#B0AC9C"></div>
<div class="a" style="left:4px;top:705px;width:771px;height:21px;background:#ECE9D8"></div><div class="a" style="left:4px;top:724px;width:771px;height:1px;background:#F4EEEC"></div>
<div class="a" style="left:7px;top:711px;font-size:10.8px">Build finished successfully.</div>
<div class="a" style="left:597px;top:711px;font-size:10.8px">ln 29</div>
<div class="a" style="left:648px;top:711px;font-size:10.8px">col 13</div>
<div class="a" style="left:688px;top:711px;font-size:10.8px">ch 13</div>
<div class="a" style="left:738px;top:711px;font-size:10.8px">INS</div>
<svg style="left:760px;top:712px" width="14" height="13" viewBox="0 0 14 13">
 <g fill="#C8C4B0"><rect x="9" y="1" width="2" height="2"/><rect x="9" y="5" width="2" height="2"/><rect x="5" y="5" width="2" height="2"/><rect x="9" y="9" width="2" height="2"/><rect x="5" y="9" width="2" height="2"/><rect x="1" y="9" width="2" height="2"/></g>
</svg>

</body></html>
